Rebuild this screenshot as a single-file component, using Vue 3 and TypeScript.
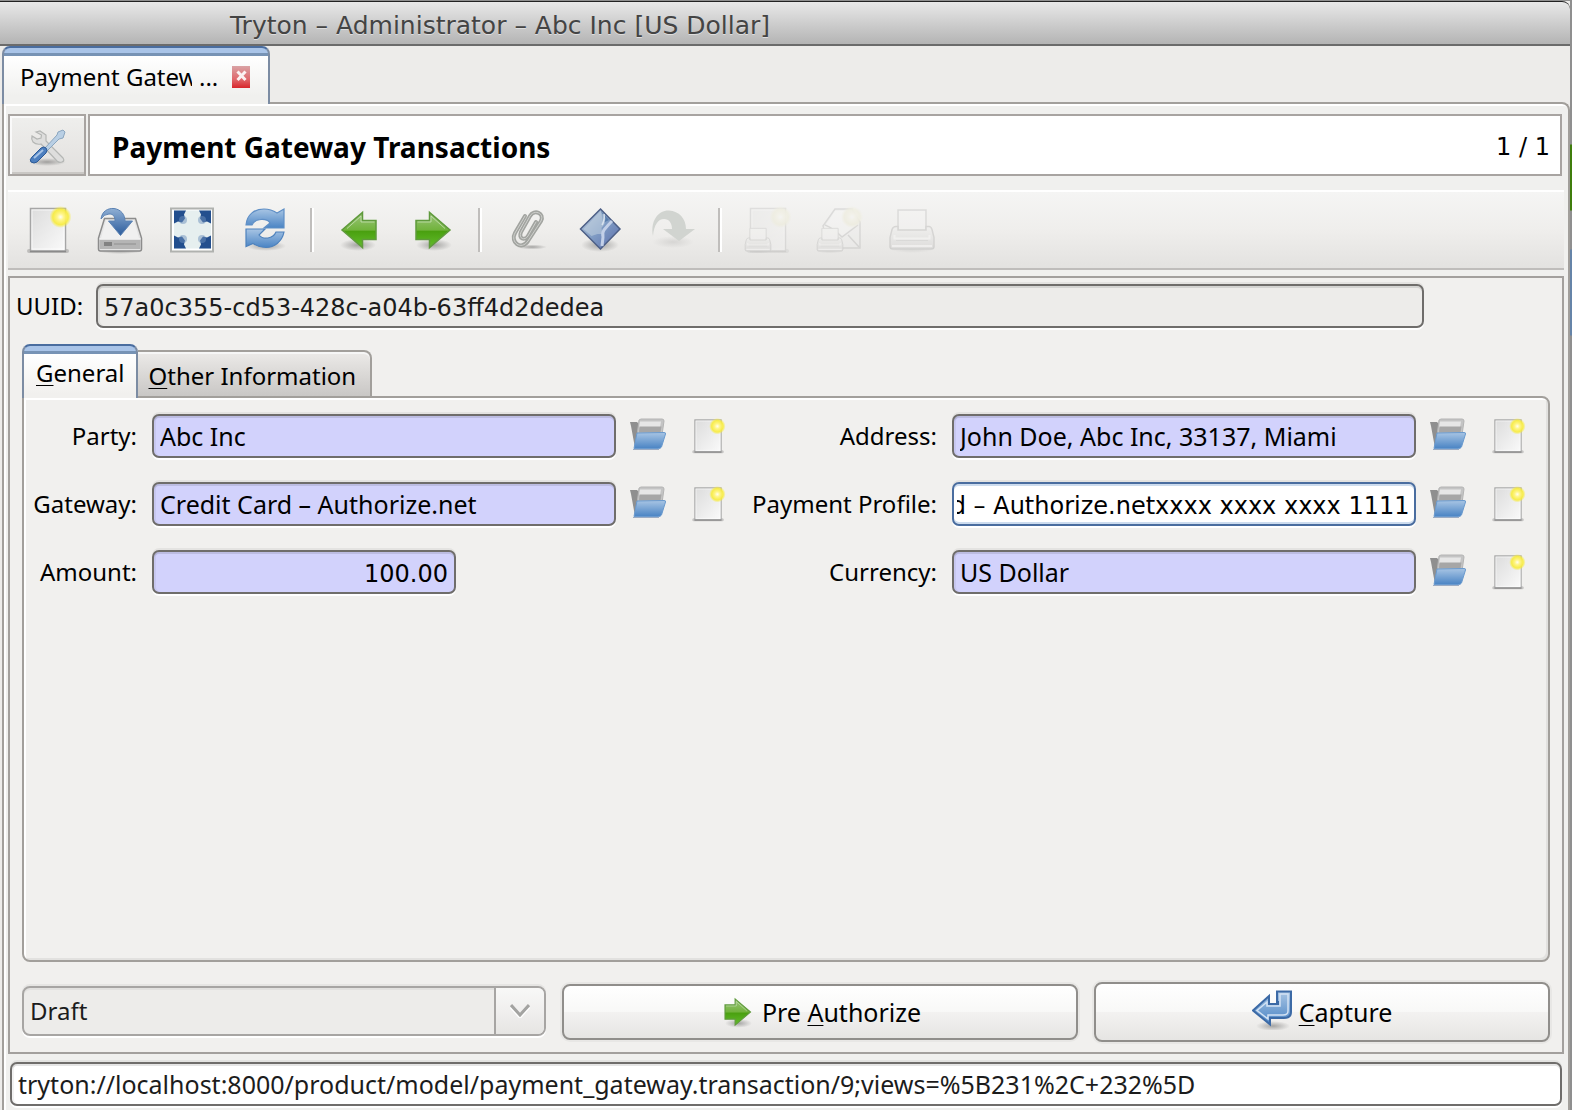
<script setup lang="ts">
import { onMounted, ref } from 'vue'

interface Field {
  id: string
  label: string
  value: string
  kind: 'relation' | 'active' | 'number'
}

const fields: Field[] = [
  { id: 'party', label: 'Party:', value: 'Abc Inc', kind: 'relation' },
  { id: 'address', label: 'Address:', value: 'John Doe, Abc Inc, 33137, Miami', kind: 'relation' },
  { id: 'gateway', label: 'Gateway:', value: 'Credit Card – Authorize.net', kind: 'relation' },
  { id: 'profile', label: 'Payment Profile:', value: 'Credit Card – Authorize.netxxxx xxxx xxxx 1111', kind: 'active' },
  { id: 'amount', label: 'Amount:', value: '100.00', kind: 'number' },
  { id: 'currency', label: 'Currency:', value: 'US Dollar', kind: 'relation' },
]

const uuid = ref('57a0c355-cd53-428c-a04b-63ff4d2dedea')
const url = ref('tryton://localhost:8000/product/model/payment_gateway.transaction/9;views=%5B231%2C+232%5D')
const form = ref<HTMLElement | null>(null)

onMounted(() => {
  form.value?.querySelectorAll<HTMLInputElement>('input.active').forEach((el) => {
    el.scrollLeft = el.scrollWidth
  })
})
</script>

<template>
  <div class="desktop">
    <svg class="defs" width="0" height="0" aria-hidden="true">
      <defs>
        <linearGradient id="paper" x1="0" y1="0" x2="1" y2="1">
          <stop offset="0" stop-color="#dcdcdc" /><stop offset="1" stop-color="#fafafa" />
        </linearGradient>
        <radialGradient id="glow">
          <stop offset="0" stop-color="#fffef0" /><stop offset="0.3" stop-color="#fff58a" />
          <stop offset="0.7" stop-color="#f8ec3a" stop-opacity="0.9" /><stop offset="1" stop-color="#f8ec3a" stop-opacity="0" />
        </radialGradient>
        <radialGradient id="shade">
          <stop offset="0" stop-color="#000" stop-opacity="0.3" /><stop offset="1" stop-color="#000" stop-opacity="0" />
        </radialGradient>
        <linearGradient id="green" x1="0" y1="0" x2="0" y2="1">
          <stop offset="0" stop-color="#9cc47c" /><stop offset="0.5" stop-color="#71b33c" />
          <stop offset="0.54" stop-color="#4aa010" /><stop offset="1" stop-color="#63bd2c" />
        </linearGradient>
        <linearGradient id="blue" x1="0" y1="0" x2="0" y2="1">
          <stop offset="0" stop-color="#a8c5e4" /><stop offset="1" stop-color="#4a84c4" />
        </linearGradient>
        <linearGradient id="deep" x1="0" y1="0" x2="0" y2="1">
          <stop offset="0" stop-color="#8fafd4" /><stop offset="1" stop-color="#2c5c9c" />
        </linearGradient>
        <linearGradient id="metal" x1="0" y1="0" x2="0" y2="1">
          <stop offset="0" stop-color="#f2f2f2" /><stop offset="1" stop-color="#bdbdbd" />
        </linearGradient>
        <linearGradient id="gem" x1="0" y1="0" x2="1" y2="1">
          <stop offset="0" stop-color="#bccbdd" /><stop offset="0.5" stop-color="#809cc4" /><stop offset="1" stop-color="#5a6cab" />
        </linearGradient>
        <symbol id="i-new" viewBox="0 0 48 48">
          <rect x="3" y="43" width="42" height="4" rx="2" fill="#000" opacity="0.18" />
          <rect x="6.500" y="2.500" width="35" height="42.500" fill="url(#paper)" stroke="#a6a6a6" stroke-width="1.500" />
          <rect x="8" y="4" width="32" height="39" fill="none" stroke="#fff" opacity="0.7" />
          <path d="M6 45.500h36" stroke="#8a8a8a" stroke-width="1.500" />
          <circle cx="36.500" cy="11" r="11" fill="url(#glow)" />
        </symbol>
        <symbol id="i-right" viewBox="0 0 48 48">
          <ellipse cx="26" cy="39" rx="18" ry="6" fill="url(#shade)" />
          <path d="M8 14.500h13.500V6.500L42 24 21.500 41.500v-8H8z" fill="url(#green)" stroke="#5f9a3c" stroke-width="1.500" />
          <path d="M9.500 16h13.500V10l14 12.500" fill="none" stroke="#cfe6bf" opacity="0.7" />
        </symbol>
        <symbol id="i-printer" viewBox="0 0 48 48">
          <ellipse cx="24" cy="43" rx="23" ry="4" fill="url(#shade)" />
          <path d="M10 4h28v22H10z" fill="#f6f6f6" stroke="#9a9a9a" stroke-width="1.500" />
          <path d="M8 20.500h2V24h28v-3.500h3q2 0 3 3l2 8v9q0 2.500-3 2.500H5q-3 0-3-2.500v-9l2-8q1-3 4-3z" fill="url(#metal)" stroke="#8e8e8e" stroke-width="1.500" />
          <path d="M6.500 29v3.500h35V29M4 40h40" fill="none" stroke="#fff" stroke-width="2" />
          <path d="M8 34.500h32" stroke="#a8a8a8" />
        </symbol>
      </defs>
    </svg>

    <div class="window">
      <header class="titlebar">Tryton – Administrator – Abc Inc [US Dollar]</header>

      <nav class="tabs">
        <div class="tab">
          <span class="tab-name">Payment Gatew</span>
          <span class="tab-dots">...</span>
          <button class="close" aria-label="Close tab">
            <svg viewBox="0 0 18 22" width="18" height="22">
              <defs>
                <linearGradient id="red" x1="0" y1="0" x2="0" y2="1">
                  <stop offset="0" stop-color="#d9a3a5" /><stop offset="0.6" stop-color="#e0686c" /><stop offset="1" stop-color="#d8262c" />
                </linearGradient>
              </defs>
              <rect width="18" height="22" fill="url(#red)" />
              <path d="M5.500 5.500l8 8.500M13.500 5.500l-8 8.500" stroke="#fff" stroke-width="3" opacity="0.9" />
            </svg>
          </button>
        </div>
      </nav>

      <main class="page">
        <div class="heading">
          <button class="tools" aria-label="Preferences">
            <svg viewBox="0 0 40 40" width="40" height="40">
              <ellipse cx="20" cy="36" rx="19" ry="4" fill="url(#shade)" />
              <path d="M9 6l4-1 6 4v6l17 17q2 3-1 4-3 1-5-1L14 18q-5 1-8-2-2-3-1-6l5 3 4-1 .5-3z" fill="#dededd" stroke="#b4b6b4" stroke-width="1.200" />
              <path d="M18 22l12-13 1-3 5-2 2 2-2 6-4 1-12 12z" fill="#b9cfe4" stroke="#8ba6bf" />
              <path d="M5 31l9-9q3-2 5 0t0 5l-9 9q-3 2-6 0-2-2 1-5z" fill="#4d7fbf" stroke="#2c5a97" />
              <path d="M7 32l9-8" stroke="#a6c3e6" stroke-width="2" />
            </svg>
          </button>
          <div class="title">
            <h1>Payment Gateway Transactions</h1>
            <span>1 / 1</span>
          </div>
        </div>

        <div class="toolbar" role="toolbar">
          <button aria-label="New"><svg viewBox="0 0 48 48"><use href="#i-new" /></svg></button>
          <button aria-label="Save">
            <svg viewBox="0 0 48 48">
              <ellipse cx="24" cy="45" rx="23" ry="3" fill="url(#shade)" />
              <path d="M8.500 12.500h31L45.500 32v11q0 2-2 2h-39q-2 0-2-2V32z" fill="#e4e4e4" stroke="#8c8c8c" stroke-width="1.500" />
              <path d="M10 14h28l5 18H5z" fill="#f0f0f0" />
              <path d="M3.500 33h41v10h-41z" fill="#b5b5b5" />
              <path d="M3.500 33h41" stroke="#f5f5f5" stroke-width="1.500" />
              <path d="M8 38h8" stroke="#828282" stroke-width="4" />
              <path d="M18 38h22" stroke="#a2a2a2" stroke-width="2" />
              <path d="M5 13C6 5 12 2 18 2.500c7 1 11 6 11 12.500h7.500L24.500 29.500 12.500 15H19c0-5-2-7-6-7q-5 0-8 5z" fill="url(#deep)" stroke="#5b82b3" />
            </svg>
          </button>
          <button aria-label="Switch view">
            <svg viewBox="0 0 48 48">
              <rect x="3" y="2.500" width="42" height="43" fill="#fff" stroke="#b0b2af" stroke-width="2" />
              <rect x="6" y="4.500" width="37" height="38" fill="#e6efef" />
              <g fill="#234f8e">
                <path d="M6 4.500h12l-2 4 1 4-3 4-4-1-4 2z" />
                <path d="M43 4.500H31l2 4-1 4 3 4 4-1 4 2z" />
                <path d="M6 42.500h12l-2-4 1-4-3-4-4 1-4-2z" />
                <path d="M43 42.500H31l2-4-1-4 3-4 4 1 4-2z" />
              </g>
              <g fill="#6f92bd" opacity="0.5">
                <circle cx="15" cy="14" r="4" /><circle cx="34" cy="14" r="4" />
                <circle cx="15" cy="33" r="4" /><circle cx="34" cy="33" r="4" />
              </g>
            </svg>
          </button>
          <button aria-label="Reload">
            <svg viewBox="0 0 48 48">
              <ellipse cx="26" cy="40" rx="20" ry="5" fill="url(#shade)" />
              <path d="M6 19C7 8 15 3 24 3c6 0 10 2 13 4l7-4v19H24l6-5c-3-5-15-5-18 2z" fill="url(#blue)" stroke="#5f8fc6" stroke-width="1.200" />
              <path d="M44 26C42 36 34 41.500 26 41.500c-6 0-10-2-13-4l-7 3V23h19l-6 6c4 5 14 4 17-3z" fill="url(#blue)" stroke="#4e82bd" stroke-width="1.200" />
            </svg>
          </button>
          <i class="sep"></i>
          <button aria-label="Previous"><svg viewBox="0 0 48 48"><use href="#i-right" transform="translate(48 0) scale(-1 1)" /></svg></button>
          <button aria-label="Next"><svg viewBox="0 0 48 48"><use href="#i-right" /></svg></button>
          <i class="sep"></i>
          <button aria-label="Attachment">
            <svg viewBox="0 0 48 48">
              <ellipse cx="28" cy="41" rx="15" ry="2.500" fill="url(#shade)" />
              <path d="M21 10L11 27c-5 9 6 18 13 8l13-20c4-8-7-12-11-5L17 26c-3 7 4 9 7 4l8-14" fill="none" stroke="#a2a4a0" stroke-width="4" stroke-linecap="round" />
              <path d="M21 10L11 27c-5 9 6 18 13 8l13-20c4-8-7-12-11-5L17 26c-3 7 4 9 7 4l8-14" fill="none" stroke="#cfd0cd" stroke-width="1" stroke-linecap="round" />
            </svg>
          </button>
          <button aria-label="Actions">
            <svg viewBox="0 0 48 48">
              <ellipse cx="24" cy="39" rx="19" ry="7" fill="url(#shade)" />
              <path d="M24.500 3L44 23 24.500 43 4.500 23z" fill="url(#gem)" stroke="#4d5f86" stroke-width="1.500" />
              <path d="M25 5l8 9-6 3z" fill="#4d74a6" opacity="0.8" />
              <path d="M24.500 5l5 7-1 6-3 4 1 6-5 0-6 2-8-7z" fill="#c8d5e2" opacity="0.5" />
              <path d="M36 15q-4 4-8 9-2 3-1 7l-1 9" fill="none" stroke="#c3d0e8" stroke-width="3" />
              <path d="M28 8q1 6-2 11" fill="none" stroke="#d8e2ee" stroke-width="1.500" />
            </svg>
          </button>
          <button aria-label="Relate">
            <svg viewBox="0 0 48 48">
              <ellipse cx="25" cy="36" rx="21" ry="6" fill="url(#shade)" opacity="0.3" />
              <path d="M5 30C2 14 11 4 21 4.500c10 .5 17 8 17 18.500h9L31 35 15 23h9c0-6-3-10-8-10-6 0-10 6-11 17z" fill="#d1d4d0" />
            </svg>
          </button>
          <i class="sep"></i>
          <button aria-label="Report" disabled>
            <svg viewBox="0 0 48 48">
              <use href="#i-new" />
              <use href="#i-printer" x="0" y="20" width="28" height="28" />
            </svg>
          </button>
          <button aria-label="Email" disabled>
            <svg viewBox="0 0 48 48">
              <path d="M7 20L19 3h17l8 13v26H14z" fill="#ececec" stroke="#999" stroke-width="1.500" />
              <path d="M8 22L19 5h16l6 13-15 12z" fill="#fafafa" />
              <path d="M9 19q8 3 17 12l16-12M43 41L32 29" fill="none" stroke="#999" stroke-width="1.500" />
              <circle cx="36" cy="11" r="11" fill="url(#glow)" />
              <use href="#i-printer" x="0" y="20" width="28" height="28" />
            </svg>
          </button>
          <button aria-label="Print" disabled><svg viewBox="0 0 48 48"><use href="#i-printer" /></svg></button>
        </div>

        <form ref="form" class="form" @submit.prevent>
          <div class="uuid">
            <label for="uuid">UUID:</label>
            <input id="uuid" v-model="uuid" class="field readonly" readonly />
          </div>

          <div class="subtabs" role="tablist">
            <button class="subtab current" type="button" role="tab" aria-selected="true"><u>G</u>eneral</button>
            <button class="subtab" type="button" role="tab" aria-selected="false"><u>O</u>ther Information</button>
          </div>

          <section class="pane">
            <div class="grid">
              <template v-for="f in fields" :key="f.id">
                <label :for="f.id">{{ f.label }}</label>
                <input :id="f.id" class="field" :class="f.kind" :value="f.value" />
                <div class="lookup">
                  <template v-if="f.kind !== 'number'">
                    <button class="open" type="button" aria-label="Open record">
                      <svg viewBox="0 0 36 36" width="36" height="36">
                        <path d="M0 4h7l2 2v24H5L1 8z" fill="#8f8f8f" />
                        <path d="M6 26L9 2l2-1h21q2 0 2 2l-2 14z" fill="#c4c4c4" stroke="#b4b4b4" />
                        <path d="M10 3.500h21l-1 6H9z" fill="#e6e6e6" />
                        <path d="M9.500 8.500h22l-1 6H9z" fill="#a6a6a6" />
                        <path d="M4 30.500l3-15.500 27-.5q2 0 1.500 1.500l-4 13q-1 1.500-3 1.500z" fill="url(#blue)" stroke="#6a9ace" />
                        <path d="M3 31.500h26" stroke="#47689a" opacity="0.5" />
                      </svg>
                    </button>
                    <button class="create" type="button" aria-label="New record">
                      <svg viewBox="0 0 48 48" width="36" height="36"><use href="#i-new" /></svg>
                    </button>
                  </template>
                </div>
              </template>
            </div>
          </section>

          <div class="actions">
            <div class="state">
              <select aria-label="State" disabled>
                <option>Draft</option>
              </select>
              <span class="chevron">
                <svg viewBox="0 0 20 14" width="20" height="14">
                  <path d="M1 3l9 10 9-10" fill="none" stroke="#fff" stroke-width="3" />
                  <path d="M1 1l9 10 9-10" fill="none" stroke="#a3a3a1" stroke-width="3" />
                </svg>
              </span>
            </div>
            <button class="action" type="button">
              <svg viewBox="0 0 48 48" width="36" height="36"><use href="#i-right" /></svg>
              <span>Pre <u>A</u>uthorize</span>
            </button>
            <button class="action tall" type="button">
              <svg viewBox="0 0 40 40" width="40" height="40">
                <ellipse cx="21" cy="36" rx="17" ry="5" fill="url(#shade)" />
                <path d="M25 1.500h14V22q0 6-7 6H18v6.500L1 20.500 17 6v8h9V12h-1z" fill="url(#blue)" stroke="#3c6aa6" stroke-width="2" />
                <path d="M28 4h8v17q0 4-5 4H16v4L5 20.500 15 12v4h13z" fill="none" stroke="#d3e2f3" stroke-width="1.500" />
              </svg>
              <span><u>C</u>apture</span>
            </button>
          </div>
        </form>

        <input v-model="url" class="field url" aria-label="Record URL" />
      </main>
    </div>
  </div>
</template>

<style>
body {
  background: #8b8b8b;
}
</style>

<style scoped>
* {
  box-sizing: border-box;
}

.desktop {
  min-height: 100vh;
  display: flex;
  padding: 1px 2px 0 0;
  background: linear-gradient(#8f8f8f 144px, #3f7d0c 145px 210px, #8f8f8f 211px 249px, #6684a8 250px 335px, #8f8f8f 336px);
  font-family: "Noto Sans", "Open Sans", sans-serif;
  font-size: 24px;
  line-height: 32px;
  color: #000;
}

.defs {
  position: absolute;
}

button,
input,
select {
  font: inherit;
  color: inherit;
  margin: 0;
  padding: 0;
}

button {
  border: 0;
  background: none;
}

svg {
  display: block;
}

.window {
  flex: 1;
  min-width: 0;
  display: flex;
  flex-direction: column;
  background: #edecea;
}

.titlebar {
  height: 45px;
  padding: 8px 230px;
  border-top: 1px solid #222;
  border-bottom: 2px solid #6b6b6b;
  border-top-right-radius: 8px;
  background: linear-gradient(#e8e8e8, #b4b4b4);
  color: #444;
  font-family: "DejaVu Sans", sans-serif;
  font-size: 25px;
  white-space: nowrap;
  text-shadow: 0 1px 0 #dedede;
}

.tabs {
  display: flex;
  padding-left: 2px;
}

.tab {
  position: relative;
  display: flex;
  align-items: center;
  width: 268px;
  height: 58px;
  margin-bottom: -2px;
  padding: 2px 16px 0;
  border: 2px solid #4a6d9f;
  border-bottom: 0;
  border-left-color: #7c8ca3;
  border-right-color: #7c8ca3;
  border-radius: 8px 8px 0 0;
  background: linear-gradient(#a9c4e8 0 5px, #7793b5 5px 8px, #fff 8px, #f0f0ee 48px);
}

.tab-name {
  width: 172px;
  overflow: hidden;
  white-space: nowrap;
}

.tab-dots {
  width: 40px;
  padding-left: 7px;
}

.close {
  flex: none;
}

.page {
  flex: 1;
  display: flex;
  flex-direction: column;
  margin-left: 2px;
  padding: 10px 4px 4px;
  border: 2px solid #a29f9b;
  border-bottom: 0;
  border-top-right-radius: 8px;
  background: #f0f0ee;
  box-shadow: inset 2px 2px 0 #fff;
}

.heading {
  display: flex;
  gap: 2px;
  height: 62px;
  padding-right: 2px;
}

.tools {
  display: flex;
  align-items: center;
  justify-content: center;
  width: 78px;
  padding-top: 2px;
  border: 2px solid #a8a4a1;
  background: linear-gradient(#efefed, #e2e0de);
  box-shadow: inset 2px 2px 0 #fafafa, inset 0 -2px 0 #c9c7c4;
}

.title {
  flex: 1;
  display: flex;
  align-items: center;
  justify-content: space-between;
  padding: 4px 10px 0 22px;
  border: 2px solid #a8a4a1;
  background: #fff;
}

.title h1 {
  margin: 0;
  font-size: 28px;
  font-weight: 700;
}

.title span {
  font-family: "DejaVu Sans", sans-serif;
}

.toolbar {
  display: flex;
  align-items: center;
  height: 80px;
  margin-top: 14px;
  padding-left: 4px;
  border-top: 2px solid #fff;
  border-bottom: 2px solid #bfbdbb;
  background: linear-gradient(#f5f5f4, #efeeec 50%, #e3e2e0);
}

.toolbar button {
  width: 72px;
  padding: 0 12px;
}

.toolbar button svg {
  width: 48px;
  height: 48px;
}

.toolbar button:disabled svg {
  opacity: 0.25;
  filter: saturate(0.25);
}

.sep {
  width: 4px;
  height: 44px;
  margin: 0 10px;
  border-left: 2px solid #c0bebc;
  background: #fff;
}

.form {
  flex: 1;
  display: flex;
  flex-direction: column;
  margin-top: 6px;
  padding: 6px 12px 10px;
  border: 2px solid #a3a09d;
  background: #f1f0ee;
}

.field {
  min-width: 0;
  height: 44px;
  padding: 0 6px;
  border: 2px solid #6f6d6b;
  border-radius: 7px;
  outline: 0;
  background: #d2d2fc;
  box-shadow: inset 0 2px 0 rgba(0, 0, 0, 0.1), inset 2px 0 0 rgba(0, 0, 0, 0.05), 0 2px 0 #fff, 0 -2px 0 rgba(0, 0, 0, 0.05);
  font-size: 25px;
}

.field.readonly,
.field.active,
.field.number {
  padding-top: 3px;
  font-family: "DejaVu Sans", sans-serif;
  font-size: 24px;
}

.readonly {
  background: #edecea;
  color: #1c1c1c;
}

.uuid {
  display: flex;
  align-items: center;
  padding-right: 126px;
}

.uuid label {
  width: 80px;
  margin-left: -6px;
}

.uuid .field {
  flex: 1;
}

.subtabs {
  display: flex;
  align-items: flex-end;
  height: 54px;
  margin-top: 16px;
  margin-bottom: -2px;
}

.subtab {
  height: 48px;
  padding: 4px 14px 0 10px;
  border: 2px solid #a29f9b;
  border-left: 0;
  border-radius: 0 8px 0 0;
  background: linear-gradient(#eceae8, #c9c7c5);
  box-shadow: inset 0 2px 0 #f6f6f6;
  white-space: nowrap;
}

.subtab.current {
  position: relative;
  height: 54px;
  padding: 2px 12px 0;
  border: 2px solid #4a6d9f;
  border-bottom: 0;
  border-left-color: #7c8ca3;
  border-right-color: #7c8ca3;
  border-radius: 8px 8px 0 0;
  background: linear-gradient(#a9c4e8 0 5px, #7793b5 5px 8px, #fff 8px, #f1f0ee 48px);
  box-shadow: none;
}

u {
  text-decoration-thickness: 1px;
  text-underline-offset: 3px;
}

.pane {
  flex: 1;
  padding: 16px 12px 16px 0;
  border: 2px solid #a29f9b;
  border-radius: 0 8px 8px 8px;
  box-shadow: inset 2px 2px 0 #fff, inset -2px -2px 0 #e2e1df;
}

.grid {
  display: grid;
  grid-template-columns: 114px minmax(0, 1fr) 120px 202px minmax(0, 1fr) 120px;
  row-gap: 24px;
  align-items: center;
}

.grid label {
  padding-right: 1px;
  text-align: right;
  white-space: nowrap;
}

.grid .field {
  margin-left: 14px;
}

.field.number {
  width: 304px;
  text-align: right;
}

.field.active {
  padding-right: 5px;
  padding-left: 3px;
  border-color: #4a6d9f;
  background: #fff;
  box-shadow: inset 0 2px 0 #cddcee, inset 0 -2px 0 #cddcee, 0 2px 0 #fff, 0 -2px 0 rgba(0, 0, 0, 0.05);
}

.lookup {
  display: flex;
  align-items: center;
}

.open {
  width: 64px;
  padding-left: 14px;
}

.create {
  width: 56px;
  padding-left: 10px;
}

.actions {
  display: grid;
  grid-template-columns: 524fr 516fr 456fr;
  gap: 16px;
  align-items: center;
  margin-top: 20px;
}

.state {
  display: flex;
  height: 50px;
  margin-bottom: 2px;
  border: 2px solid #a7a5a3;
  border-radius: 8px;
  background: #edecea;
  box-shadow: inset 0 2px 0 #e2e1df, 0 2px 0 #fff, 0 -2px 0 #e6e5e3;
}

.state select {
  flex: 1;
  padding: 0 6px;
  border: 0;
  background: none;
  appearance: none;
  color: #1c1c1c;
  opacity: 1;
}

.chevron {
  display: flex;
  align-items: center;
  justify-content: center;
  width: 50px;
  border-left: 2px solid #a7a5a3;
  border-radius: 0 6px 6px 0;
  background: linear-gradient(#f8f8f7, #f0efee 50%, #e6e5e3);
}

.action {
  display: flex;
  align-items: center;
  justify-content: center;
  gap: 7px;
  height: 56px;
  border: 2px solid #908e8b;
  border-radius: 8px;
  background: linear-gradient(#fff, #f8f8f7 50%, #f3f2f1 50%, #e6e5e3);
  box-shadow: 0 0 0 2px #e8e7e5;
  font-size: 25px;
}

.action.tall {
  height: 60px;
}

.action.tall svg {
  margin-bottom: 4px;
}

.url {
  margin: 8px 2px 0;
  background: #fff;
  color: #1c1c1c;
}
</style>
